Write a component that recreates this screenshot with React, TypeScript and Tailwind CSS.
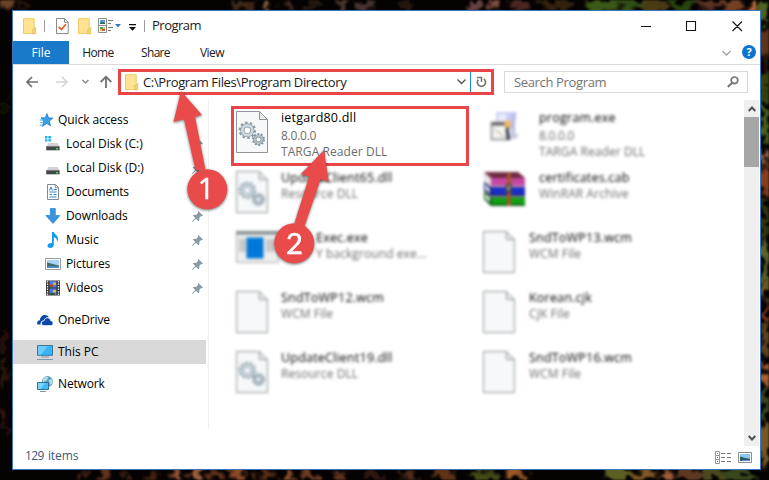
import { ReactNode } from 'react';
import clsx from 'clsx';

type BlobProps = [x: number, y: number, rx: number, ry: number, color: string];

const WALLPAPER: BlobProps[] = [
  [8, 3, 6, 5, '#6b4028'],
  [22, 6, 5, 6, '#2c1a10'],
  [242, 3, 12, 7, '#3c2618'],
  [266, 5, 4, 8, '#8a6242'],
  [285, 3, 6, 6, '#3d261b'],
  [310, 4, 8, 6, '#22150f'],
  [343, 5, 4, 8, '#4e372a'],
  [365, 4, 5, 8, '#463330'],
  [410, 5, 9, 5, '#251611'],
  [474, 5, 5, 9, '#654241'],
  [494, 5, 6, 9, '#7c4b3f'],
  [520, 4, 9, 6, '#4b2520'],
  [555, 4, 18, 7, '#30200f'],
  [603, 5, 15, 9, '#3b5817'],
  [628, 3, 16, 9, '#315014'],
  [652, 6, 15, 8, '#4a3b18'],
  [683, 4, 14, 9, '#28430e'],
  [708, 4, 13, 8, '#5a3321'],
  [731, 4, 12, 9, '#734024'],
  [752, 4, 5, 10, '#b86b3d'],
  [764, 12, 7, 10, '#4d6320'],
  [766, 42, 6, 16, '#5d361a'],
  [767, 62, 5, 10, '#2a1409'],
  [766, 85, 6, 16, '#34430f'],
  [766, 122, 6, 22, '#49601d'],
  [766, 158, 4, 6, '#a56d50'],
  [766, 180, 5, 14, '#88401a'],
  [766, 220, 6, 22, '#30350f'],
  [766, 262, 6, 22, '#5b642a'],
  [764, 290, 5, 10, '#6d5a26'],
  [767, 311, 4, 10, '#a3421f'],
  [766, 340, 6, 18, '#5d431e'],
  [766, 373, 4, 11, '#b46531'],
  [766, 402, 6, 18, '#3c431b'],
  [766, 443, 6, 22, '#745827'],
  [5, 108, 4, 12, '#0a0704'],
  [3, 343, 5, 14, '#271107'],
  [5, 374, 4, 14, '#2a1508'],
  [2, 412, 4, 10, '#3a170b'],
  [6, 432, 4, 10, '#210e07'],
  [82, 475, 4, 9, '#4a2415'],
  [105, 477, 5, 9, '#68341f'],
  [125, 475, 4, 9, '#3a1a10'],
  [151, 477, 7, 8, '#45200e'],
  [178, 475, 4, 10, '#9d5635'],
  [196, 477, 7, 9, '#a0603b'],
  [217, 478, 7, 8, '#66351d'],
  [239, 476, 7, 10, '#8d4925'],
  [263, 478, 8, 9, '#592b18'],
  [287, 476, 6, 10, '#884e2b'],
  [312, 478, 10, 9, '#6c3b22'],
  [340, 476, 6, 10, '#5d321d'],
  [372, 477, 10, 7, '#2f180e'],
  [410, 478, 9, 7, '#4f2917'],
  [445, 476, 12, 9, '#603319'],
  [485, 476, 15, 9, '#454819'],
  [516, 475, 8, 10, '#9d5826'],
  [620, 476, 14, 10, '#5c6020'],
  [642, 477, 12, 9, '#7d5921'],
  [666, 475, 8, 10, '#9c5c35'],
  [690, 477, 14, 9, '#5e3923'],
  [715, 476, 12, 10, '#4b4a1c'],
  [742, 476, 16, 9, '#38461a'],
];

function Wallpaper() {
  return (
    <svg className="absolute inset-0" width="769" height="480">
      <defs>
        <filter id="soft" x="0" y="0" width="769" height="480" filterUnits="userSpaceOnUse">
          <feTurbulence type="fractalNoise" baseFrequency="0.09" numOctaves="2" seed="4" result="noise" />
          <feGaussianBlur in="SourceGraphic" stdDeviation="1.8" result="blobs" />
          <feDisplacementMap in="blobs" in2="noise" scale="26" xChannelSelector="R" yChannelSelector="G" />
          <feGaussianBlur stdDeviation="0.8" />
        </filter>
      </defs>
      <rect width="769" height="480" fill="#050302" />
      <g filter="url(#soft)">
        {WALLPAPER.map(([x, y, rx, ry, color], i) => (
          <ellipse key={i} cx={x} cy={y} rx={rx} ry={ry} fill={color} />
        ))}
      </g>
    </svg>
  );
}

function FolderIcon({ className }: { className?: string }) {
  return (
    <svg className={clsx('shrink-0', className)} width="14" height="17" viewBox="0 0 14 17">
      <path d="M.5.7h10.7v14.8H.5z" fill="#ffe391" stroke="#ecca6b" />
      <path d="M9.7 11.4h1.4l1.6-1.9v6.3H9.7z" fill="#f6d67b" stroke="#dfbb55" strokeWidth=".8" />
    </svg>
  );
}

function CheckDocIcon({ className }: { className?: string }) {
  return (
    <svg className={clsx('shrink-0', className)} width="13" height="17" viewBox="0 0 13 17">
      <path d="M.5.5h8.2l3.5 3.6v11.5H.5z" fill="#fdfdfd" stroke="#8a8a8a" />
      <path d="M8.5.7v3.6h3.6" fill="none" stroke="#8a8a8a" />
      <path d="M2.7 8.8l2.7 2.8 4.5-5.3" fill="none" stroke="#ea5a22" strokeWidth="1.7" />
    </svg>
  );
}

function OptionsIcon({ className }: { className?: string }) {
  return (
    <svg className={clsx('shrink-0', className)} width="16" height="16" viewBox="0 0 16 16">
      <path d="M.5.5h8v14h-8zM.5 7.5h8" fill="#fff" stroke="#8c8c8c" />
      <path d="M2 2h5v4H2z" fill="#5b9bd8" />
      <path d="M2 5l2-1 3 1v1H2z" fill="#2b6b52" />
      <path d="M2 9h5v4H2z" fill="#dfc45a" />
      <path d="M2 9h3v2H2z" fill="#4da557" />
      <path d="M4 11h3v2H4z" fill="#cf5b36" />
      <path d="M10 2.5h5M10 5.5h3M10 9.5h5M10 12.5h3" stroke="#777" />
    </svg>
  );
}

function StarIcon() {
  return (
    <svg width="16" height="16" viewBox="0 0 16 16">
      <path
        d="M10 1.6l1.5 4.2 4.4.3-3.5 2.9 1 4.8-3.6-2.4-4.3 3 1.2-5.1-2.4-3.1 3.9-.2z"
        fill="#3aa0e8"
        stroke="#1f7fcd"
        strokeWidth=".8"
      />
      <path d="M4 5.5h3M2.6 8h4M3.4 10.5h2.3M2.6 13.2h2.8" stroke="#4aabea" />
    </svg>
  );
}

function DiskIcon({ system }: { system?: boolean }) {
  return (
    <svg width="16" height="16" viewBox="0 0 16 16">
      {system && <path d="M0 0h2.5v2.4H0zM3.3 0H6v2.4H3.3zM0 3.2h2.5v2.4H0zM3.3 3.2H6v2.4H3.3z" fill="#1cb5ea" />}
      <path d="M3.5 7h9l2 3.4H1.3z" fill="#cfd1d2" />
      <path d="M1.2 10.3h13.4v4H1.2z" fill="#45484a" />
      <path d="M11 12h2v1.4h-2z" fill="#39e639" />
    </svg>
  );
}

function DocumentsIcon() {
  return (
    <svg width="16" height="16" viewBox="0 0 16 16">
      <path d="M2.5.5h8l3 3v12h-11z" fill="#fff" stroke="#7f8b94" />
      <path d="M10.3.6v3.2h3.2" fill="none" stroke="#7f8b94" />
      <path d="M4.5 6.5L6 3l1.4 3.5M8.5 5.5h3M4.5 8h7M4.5 10.5H7M8.5 10.5h3M4.5 13h7" fill="none" stroke="#2f86cc" />
    </svg>
  );
}

function DownloadsIcon() {
  return (
    <svg width="16" height="16" viewBox="0 0 16 16">
      <path d="M5.3.5h5v7h4.6L8 15.6.9 7.5h4.4z" fill="#3b94e0" stroke="#2b7fcb" strokeWidth=".7" />
    </svg>
  );
}

function MusicIcon() {
  return (
    <svg width="16" height="16" viewBox="0 0 16 16">
      <path
        d="M7 0h1.8c.3 2.4 4.7 3.4 4.3 7.6-.2 1-.6 1.6-1.2 2 .4-2.4-.9-3.8-3.1-4.4v7.7c0 1.8-1.6 3.1-3.6 3.1-1.7 0-2.7-.9-2.7-2.2 0-1.7 2-2.9 4.500-2.700z"
        fill="#109df0"
      />
    </svg>
  );
}

function PicturesIcon() {
  return (
    <svg width="16" height="16" viewBox="0 0 16 16">
      <path d="M.5 2.5h15v11H.5z" fill="#fff" stroke="#969b9f" />
      <path d="M2 4h12v8H2z" fill="#a9d4f5" />
      <path d="M2 6.5c3 .3 5 1.8 12 3V12H2z" fill="#3d6f68" />
      <path d="M2 10.3c5-.4 8 .4 12-.4V12H2z" fill="#4c8cc4" />
    </svg>
  );
}

function VideosIcon() {
  return (
    <svg width="16" height="16" viewBox="0 0 16 16">
      <path d="M1 .5h14v15H1z" fill="#353535" />
      <path d="M4.5 1h7v6.5h-7zM4.5 8.5h7V15h-7z" fill="#5278d6" />
      <path d="M2.5 1v15M13.5 1v15" stroke="#e8e8e8" strokeWidth="1.3" strokeDasharray="1.5 1" />
      <path d="M8 2.5h3v2.2H8zM8 10h3v2.4H8z" fill="#e6be2f" />
      <path d="M5 4.5h3v2.2H5z" fill="#c63f31" />
      <path d="M4.5 6.5h3v1h-3zM5 13h5v2H5z" fill="#2e5a43" />
    </svg>
  );
}

function OneDriveIcon() {
  return (
    <svg width="16" height="16" viewBox="0 0 16 16">
      <path d="M.4 12.6C-.4 10 .8 8.3 3 8.2 3 5 5.4 3 8 3c2 0 3.4 1 4 2.4-3-.3-4.6 1.2-5.2 3-2.4.1-3.6 2-3.2 4.2z" fill="#0b48ab" />
      <path
        d="M4.5 11.2c0-1.500 1-2.500 2.600-2.500.4-2 1.900-3 3.700-2.800 1.700.2 2.700 1.300 2.800 2.900 1.600.1 2.400 1.200 2.400 2.500 0 1.400-.9 2.200-2.200 2.200H6.700c-1.300 0-2.200-1-2.200-2.300z"
        fill="#0b48ab"
        stroke="#fff"
        strokeWidth=".6"
      />
    </svg>
  );
}

function PcIcon() {
  return (
    <svg width="16" height="16" viewBox="0 0 16 16">
      <path d="M.5 1.5h15v9.8H.5z" fill="#38b4f5" stroke="#38769c" />
      <path d="M1 2h10L4 10.8H1z" fill="#6bcbfa" />
      <path d="M4 13h8M0 15.5h16" stroke="#7d96a8" />
    </svg>
  );
}

function NetworkIcon() {
  return (
    <svg width="16" height="16" viewBox="0 0 16 16">
      <circle cx="10.5" cy="5.6" r="5.5" fill="#5ea3bd" />
      <path d="M6 3c2-3 4-2.4 5-2 0 3-2 4-5 5zM12 4l3-1 .8 4-2.8 2z" fill="#b7dce5" />
      <path d="M.5 6.5h11v7H.5z" fill="#45bbf7" stroke="#2f7198" />
      <path d="M1 7h7l-4.5 6H1z" fill="#7fd3fb" />
      <path d="M3 15.5h6" stroke="#7d96a8" />
    </svg>
  );
}

function PinIcon() {
  return (
    <svg className="absolute right-[3px] top-[7px]" width="11" height="11" viewBox="0 0 11 11">
      <path d="M6.3 0L11 4.6l-1 .6-.9-.2-1.9 2 .2 2.3-1 .9-2.5-2.5L.5 11 0 10.5l3.2-3.4L.8 4.6l1-.9 2.3.3 1.9-2-.3-1z" fill="#8b9ba6" />
    </svg>
  );
}

type NavItemProps = {
  label: string;
  icon: ReactNode;
  nested?: boolean;
  pinned?: boolean;
  active?: boolean;
  className?: string;
};

function NavItem({ label, icon, nested, pinned, active, className }: NavItemProps) {
  return (
    <div
      className={clsx(
        'relative flex h-6 items-center gap-[5px]',
        nested ? 'pl-8' : 'pl-6',
        active && 'bg-[#d9d9d9]',
        className,
      )}
    >
      <span className="w-4 shrink-0">{icon}</span>
      <span className="whitespace-nowrap">{label}</span>
      {pinned && <PinIcon />}
    </div>
  );
}

function Sidebar() {
  return (
    <nav className="w-[193px] shrink-0 pt-[9px] text-black">
      <NavItem label="Quick access" icon={<StarIcon />} className="tracking-[-0.08px]" />
      <NavItem label="Local Disk (C:)" icon={<DiskIcon system />} nested pinned />
      <NavItem label="Local Disk (D:)" icon={<DiskIcon />} nested pinned />
      <NavItem label="Documents" icon={<DocumentsIcon />} nested pinned className="tracking-[-0.15px]" />
      <NavItem label="Downloads" icon={<DownloadsIcon />} nested pinned className="tracking-[-0.1px]" />
      <NavItem label="Music" icon={<MusicIcon />} nested pinned />
      <NavItem label="Pictures" icon={<PicturesIcon />} nested pinned className="tracking-[-0.1px]" />
      <NavItem label="Videos" icon={<VideosIcon />} nested pinned />
      <NavItem label="OneDrive" icon={<OneDriveIcon />} className="mt-2 tracking-[-0.1px]" />
      <NavItem label="This PC" icon={<PcIcon />} active className="mt-2" />
      <NavItem label="Network" icon={<NetworkIcon />} className="mt-2 tracking-[-0.15px]" />
    </nav>
  );
}

function Gear({ cx, cy, r, color, fill }: { cx: number; cy: number; r: number; color: string; fill: string }) {
  return (
    <>
      <circle cx={cx} cy={cy} r={r * 0.88} fill="none" stroke={color} strokeWidth={r * 0.3} strokeDasharray={`${r * 0.276} ${r * 0.276}`} />
      <circle cx={cx} cy={cy} r={r * 0.58} fill="#fdfdfd" stroke={color} strokeWidth={r * 0.5} />
      <circle cx={cx} cy={cy} r={r * 0.58} fill="none" stroke={fill} strokeWidth={r * 0.32} />
    </>
  );
}

function FileIcon({ gears }: { gears?: boolean }) {
  return (
    <svg width="32" height="42" viewBox="0 0 32 42">
      <path d="M.5.5h23l8 8v33H.5z" fill="#f6f8f9" stroke="#8f9496" />
      <path d="M23.5.5v8h8z" fill="#e9edef" stroke="#8f9496" />
      {gears && (
        <>
          <Gear cx={11.3} cy={19.3} r={8.5} color="#8a9ba6" fill="#cdd8df" />
          <Gear cx={22.5} cy={28.5} r={6.3} color="#7f929e" fill="#b3c1c9" />
        </>
      )}
    </svg>
  );
}

function AppIcon() {
  return (
    <svg width="43" height="32" viewBox="0 0 43 32">
      <path d="M.5.5h42v31H.5z" fill="#eeeeee" stroke="#aaa" />
      <path d="M0 0h43v3.5H0z" fill="#858b90" />
      <path d="M3 8h7v13H3zM30 8h9v13h-9z" fill="#c9c9c9" />
      <path d="M10.5 6.5h17v21h-17z" fill="#0078d7" />
    </svg>
  );
}

function InstallerIcon() {
  return (
    <svg width="42" height="42" viewBox="0 0 42 42">
      <path d="M13 1h21l-3 17H13z" fill="#c9ccf4" />
      <path d="M15 3h9l-2 10h-8z" fill="#e8e9fb" />
      <path d="M29 3h3v22l-4 3z" fill="#b3b8e6" />
      <path d="M8.5 11.5h16v17h-16z" fill="#f4f5f2" stroke="#85888a" strokeWidth="1.5" />
      <path d="M9 12h14v2.5H9z" fill="#54585a" />
      <path d="M12 18l9 8" stroke="#d8cfc4" strokeWidth="2" />
      <path d="M21 10.5l6-1.5 1 7-5 2z" fill="#f4b858" />
      <path d="M22.5 17l3-1 2 13h-4z" fill="#40454f" />
      <path d="M29 19l7 6-6 4z" fill="#c6c9dc" />
    </svg>
  );
}

function ArchiveIcon() {
  return (
    <svg width="44" height="36" viewBox="0 0 44 36">
      <path d="M1 1h34l7 6v28H8L1 28z" fill="#d8d8d8" />
      <path d="M1 1h34l7 6H8z" fill="#6d2940" />
      <path d="M8 7h34v8H8z" fill="#c648a5" />
      <path d="M1 11l7 5h34v9H8l-7-6z" fill="#141a7a" />
      <path d="M9 17h33v6H9z" fill="#1a2fd0" />
      <path d="M1 20l7 6h34v9H8l-7-7z" fill="#125c14" />
      <path d="M9 27h33v6H9z" fill="#11a313" />
      <path d="M2 4l5 5v4L2 9zM2 13l5 5v4l-5-4zM2 23l5 4v4l-5-4z" fill="#e9ecec" />
      <path d="M24 2h4v33h-4z" fill="#a4552a" />
      <path d="M22.5 13h6v9h-6z" fill="#504a45" />
      <path d="M24.5 15h2v4h-2z" fill="#b9b3a0" />
    </svg>
  );
}

type FileTileProps = {
  name: string;
  lines: string[];
  icon: ReactNode;
  focused?: boolean;
  wide?: boolean;
  column: 1 | 2;
  textClassName?: string;
};

function FileTile({ name, lines, icon, focused, wide, column, textClassName }: FileTileProps) {
  return (
    <div
      className={clsx(
        'flex h-[60px] border-[3px] pl-[2px]',
        column === 1 ? 'w-[238px]' : 'w-[260px]',
        focused ? 'border-[#e84549]' : 'border-transparent blur-[1.4px]',
      )}
    >
      <div className={clsx('shrink-0 pt-[2px]', column === 1 ? 'w-[45px]' : wide ? 'w-[56px]' : 'w-[46px]')}>{icon}</div>
      <div className={clsx('whitespace-nowrap pt-px leading-4 text-[#6d6d6d]', textClassName)}>
        <div className={clsx('text-[12.5px] tracking-[0.2px] text-black', lines.length > 1 && 'mb-[2px]')}>{name}</div>
        {lines.map((line) => (
          <div key={line} className={line === '8.0.0.0' ? 'tracking-[-0.25px]' : 'tracking-[0.08px]'}>
            {line}
          </div>
        ))}
      </div>
    </div>
  );
}

function FilePane() {
  return (
    <main className="grid flex-1 auto-rows-[60px] grid-cols-[247px_266px] content-start pl-[22px] pt-[7px]">
      <FileTile column={1} name="ietgard80.dll" lines={['8.0.0.0', 'TARGA Reader DLL']} icon={<FileIcon gears />} focused />
      <FileTile column={2} name="program.exe" lines={['8.0.0.0', 'TARGA Reader DLL']} icon={<InstallerIcon />} wide />
      <FileTile column={1} name="UpdateClient65.dll" lines={['Resource DLL']} icon={<FileIcon gears />} />
      <FileTile column={2} name="certificates.cab" lines={['WinRAR Archive']} icon={<ArchiveIcon />} wide />
      <FileTile column={1} name="Exec.exe" lines={['Y background exe...']} icon={<AppIcon />} textClassName="pl-[35px]" />
      <FileTile column={2} name="SndToWP13.wcm" lines={['WCM File']} icon={<FileIcon />} />
      <FileTile column={1} name="SndToWP12.wcm" lines={['WCM File']} icon={<FileIcon />} />
      <FileTile column={2} name="Korean.cjk" lines={['CJK File']} icon={<FileIcon />} />
      <FileTile column={1} name="UpdateClient19.dll" lines={['Resource DLL']} icon={<FileIcon gears />} />
      <FileTile column={2} name="SndToWP16.wcm" lines={['WCM File']} icon={<FileIcon />} />
    </main>
  );
}

function ScrollBar() {
  return (
    <div className="mr-px mt-px flex w-[15px] shrink-0 flex-col bg-[#efefef]">
      <div className="flex h-[17px] items-center justify-center">
        <svg width="8" height="6" viewBox="0 0 8 6">
          <path d="M.7 5L4 1.5 7.3 5" fill="none" stroke="#505050" strokeWidth="2" />
        </svg>
      </div>
      <div className="h-[50px] bg-[#a6a6a6]" />
      <div className="mt-auto flex h-[17px] items-center justify-center">
        <svg width="8" height="6" viewBox="0 0 8 6">
          <path d="M.7 1L4 4.5 7.3 1" fill="none" stroke="#505050" strokeWidth="2" />
        </svg>
      </div>
    </div>
  );
}

function TitleBar() {
  return (
    <header className="flex h-[30px] shrink-0 items-center pl-[10px]">
      <FolderIcon />
      <span className="ml-[7px] h-3 w-px bg-[#9a9a9a]" />
      <CheckDocIcon className="ml-[11px]" />
      <FolderIcon className="ml-[9px]" />
      <OptionsIcon className="ml-[6px]" />
      <svg className="ml-px" width="6" height="4" viewBox="0 0 6 4">
        <path d="M0 0h6L3 3.5z" fill="#3a78b8" />
      </svg>
      <svg className="ml-2 mt-[3px]" width="7" height="7" viewBox="0 0 7 7">
        <path d="M0 0h7v1.2H0zM0 3h7L3.5 6.7z" fill="#111" />
      </svg>
      <span className="ml-2 h-3 w-px bg-[#9a9a9a]" />
      <span className="ml-[7px] text-[13px] tracking-[-0.5px]">Program</span>
      <svg className="-mt-px ml-auto mr-[17px]" width="102" height="12" viewBox="0 0 102 12">
        <path d="M0 6.5h10M45.5 1.5h9v9h-9zM91.5 1.5l9.5 9.5M101 1.5L91.5 11" fill="none" stroke="#111" strokeWidth="1.1" />
      </svg>
    </header>
  );
}

function RibbonTabs() {
  return (
    <div className="flex h-6 shrink-0 items-stretch border-b border-[#dadbdc] text-center leading-6">
      <div className="h-[23px] w-14 bg-[#1979ca] text-white">File</div>
      <div className="w-[58px] tracking-[-0.6px]">Home</div>
      <div className="w-[57px] tracking-[-0.7px]">Share</div>
      <div className="w-14 tracking-[-0.5px]">View</div>
      <div className="ml-auto flex items-center gap-[11px] pr-1">
        <svg width="9" height="6" viewBox="0 0 9 6">
          <path d="M.5 1l4 4 4-4" fill="none" stroke="#a0a0a0" strokeWidth="1.3" />
        </svg>
        <span className="-mt-0.5 flex size-[14px] items-center justify-center rounded-full bg-[#0b74d1] text-[11px] font-bold leading-none text-white">
          ?
        </span>
      </div>
    </div>
  );
}

function AddressRow() {
  return (
    <div className="flex h-[34px] shrink-0 items-center">
      <svg className="ml-[13px]" width="86" height="14" viewBox="0 0 86 14" fill="none">
        <path d="M12 7H1.5M6 2L1 7l5 5" stroke="#707070" strokeWidth="1.7" />
        <path d="M30 7h10.5M36 2l5 5-5 5" stroke="#d4d4d4" strokeWidth="1.5" />
        <path d="M56.5 5l3 3 3-3" stroke="#8a8a8a" strokeWidth="1.5" />
        <path d="M80 13V2M74.7 7L80 1.7 85.3 7" stroke="#707070" strokeWidth="1.8" />
      </svg>
      <div className="ml-[6px] flex h-[26px] w-[376px] items-center border-[3px] border-[#e84549] pl-1">
        <FolderIcon />
        <span className="ml-1 whitespace-nowrap pt-px text-[13px] tracking-[-0.36px]">C:\Program Files\Program Directory</span>
        <svg className="ml-auto" width="9" height="6" viewBox="0 0 9 6">
          <path d="M.5.5l4 4 4-4" fill="none" stroke="#555" strokeWidth="1.3" />
        </svg>
        <span className="ml-1 h-5 w-px bg-[#1b87d6]" />
        <svg className="ml-[5px] mr-[4px]" width="11" height="12" viewBox="0 0 11 12">
          <path d="M2.3 3.6a4.1 4.1 0 1 0 5.5-.7" fill="none" stroke="#777" strokeWidth="1.7" />
          <path d="M1 1.5h4.5V6" fill="none" stroke="#777" strokeWidth="1.5" />
        </svg>
      </div>
      <div className="ml-[10px] flex h-[22px] w-[244px] items-center justify-between border border-[#d9d9d9] pl-[9px] pr-2 text-[13px] tracking-[-0.35px] text-[#757575]">
        <span className="pt-px">Search Program</span>
        <svg width="12" height="12" viewBox="0 0 12 12">
          <circle cx="7.5" cy="4.3" r="3.3" fill="none" stroke="#757575" strokeWidth="1.7" />
          <path d="M5.2 6.8L.8 11" stroke="#757575" strokeWidth="2" />
        </svg>
      </div>
    </div>
  );
}

function StatusBar() {
  return (
    <footer className="flex h-[23px] shrink-0 items-center pl-3 pr-2 text-[#3f5877]">
      <span className="-mt-[3px] tracking-[-0.55px]">129</span>
      <span className="-mt-[3px] ml-1 tracking-[-0.1px]">items</span>
      <svg className="ml-auto" width="37" height="13" viewBox="0 0 37 13">
        <path d="M.5.5h4v12h-4zM.5 4.5h4M.5 8.5h4" fill="none" stroke="#999" />
        <path d="M2 2h1v1H2zM2 6h1v1H2z" fill="#3a75b0" />
        <path d="M2 10h1v1H2z" fill="#d6402c" />
        <path d="M6 2.5h4M12 2.5h4M6 6.5h4M12 6.5h4M6 10.5h4M12 10.5h4" stroke="#777" />
        <path d="M23.5 1.5h13v10h-13z" fill="#fff" stroke="#8d8d8d" />
        <path d="M25 3h10v7H25z" fill="#8cc6f5" />
        <path d="M25 5.5c3 .3 5 2 10 2.2V10H25z" fill="#2f5d69" />
        <path d="M27 9h8v1h-8z" fill="#4d90d5" />
      </svg>
    </footer>
  );
}

function Callouts() {
  return (
    <svg className="absolute inset-0 drop-shadow-[0_1px_1.5px_rgba(0,0,0,0.55)]" width="769" height="480">
      <g fill="#e94b4b">
        <path d="M181 91l21 24-7 1.700L205.500 170h-10L184 119.300l-10.500 2.700z" />
        <circle cx="207.3" cy="189.3" r="20" />
        <path d="M324 150l4.6 31.7-8-2.5L304.500 226l-10-3 14.700-46.500-8.200-2.500z" />
        <circle cx="294.3" cy="243.3" r="20" />
      </g>
      <g fill="#fff" stroke="#fff" strokeWidth=".5" textAnchor="middle">
        <text className="font-['Open_Sans']" fontSize="29" x="206" y="199">
          1
        </text>
        <text className="font-['Lato']" fontSize="29" x="294.3" y="253.5">
          2
        </text>
      </g>
    </svg>
  );
}

export default function App() {
  return (
    <div className="relative h-[480px] w-[769px] overflow-hidden pl-3 pt-[10px] font-['Open_Sans','Noto_Sans',sans-serif] text-[12px] text-[#1a1a1a]">
      <Wallpaper />
      <div className="relative flex h-[460px] w-[749px] flex-col border border-[#3a76c4] bg-white">
        <TitleBar />
        <RibbonTabs />
        <AddressRow />
        <div className="flex min-h-0 flex-1">
          <Sidebar />
          <div className="mb-[18px] ml-[2px] w-px bg-[#f0f0f0]" />
          <FilePane />
          <ScrollBar />
        </div>
        <StatusBar />
      </div>
      <Callouts />
    </div>
  );
}
